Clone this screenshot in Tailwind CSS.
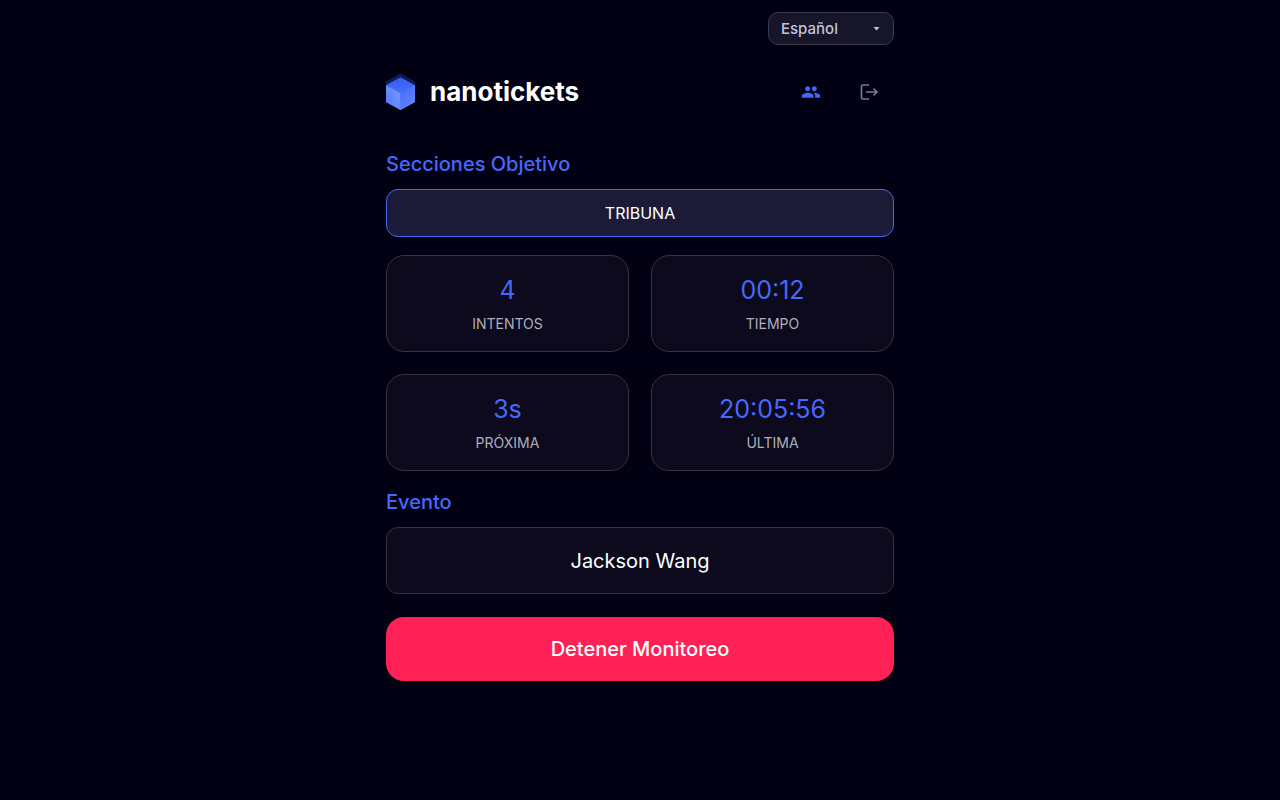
<!DOCTYPE html>
<html lang="es">
<head>
<meta charset="utf-8">
<meta name="viewport" content="width=device-width, initial-scale=1">
<title>nanotickets</title>
<script src="https://cdn.jsdelivr.net/npm/@tailwindcss/browser@4"></script>
</head>
<body class="min-h-screen bg-[#020013] font-['Inter','Liberation_Sans',sans-serif] text-white">
<div class="mx-auto flex w-full max-w-[508px] flex-col pt-3 pb-8">
  <div class="grid w-[126px] self-end">
    <select id="lang" aria-label="Idioma" class="col-start-1 row-start-1 h-[33px] appearance-none rounded-[10px] border border-[#3b394c] bg-[#161529] px-3 pt-px text-[15px] font-medium text-[#c5c3d9]">
      <option>Español</option>
      <option>English</option>
    </select>
    <svg class="pointer-events-none col-start-1 row-start-1 mr-[14px] h-1 w-[7px] self-center justify-self-end" viewBox="0 0 7 4" fill="#c5c3d9" aria-hidden="true"><path d="M0.500 0h6L3.500 3.400z"/></svg>
  </div>

  <header class="mt-[23px] flex h-12 items-center">
    <svg class="h-[38px] w-[30px]" viewBox="0 0 30 38" aria-hidden="true">
      <defs>
        <linearGradient id="top" x1="0" y1="0" x2="0" y2="1"><stop offset="0" stop-color="#315cf5"/><stop offset="1" stop-color="#4870ff"/></linearGradient>
        <linearGradient id="left" x1="1" y1="0" x2="0" y2="1"><stop offset="0" stop-color="#7d9bff"/><stop offset="1" stop-color="#4f78ff"/></linearGradient>
        <linearGradient id="right" x1="0" y1="0" x2="0.6" y2="1"><stop offset="0" stop-color="#4269f6"/><stop offset="1" stop-color="#6284ff"/></linearGradient>
      </defs>
      <path d="M14.500 0.500 29 8.500V13L14.500 6 0 13V8.500z" fill="#141a55"/>
      <path d="M14.500 4.500 29 12.500V29L14.500 37 0 29V12.500z" fill="#4870ff"/>
      <path d="M14.500 4.500 29 12.500 14.500 20.500 0 12.500z" fill="url(#top)"/>
      <path d="M0 12.500 14.500 20.500V37L0 29z" fill="url(#left)"/>
      <path d="M29 12.500 14.500 20.500V37L29 29z" fill="url(#right)"/>
    </svg>
    <span class="ml-[14px] text-[26px] leading-8 font-bold">nanotickets</span>
    <div class="ml-auto flex gap-[10px] pr-px">
      <button type="button" aria-label="Usuarios" class="flex size-12 items-center justify-center text-[#4566f5]">
        <svg class="size-5" viewBox="0 0 24 24" fill="currentColor" aria-hidden="true"><path d="M16 11c1.660 0 2.990-1.340 2.990-3S17.660 5 16 5s-3 1.340-3 3 1.340 3 3 3zm-8 0c1.660 0 2.990-1.340 2.990-3S9.660 5 8 5 5 6.340 5 8s1.340 3 3 3zm0 2c-2.330 0-7 1.170-7 3.500V19h14v-2.500c0-2.330-4.670-3.500-7-3.500zm8 0c-.290 0-.620.020-.970.050 1.160.840 1.970 1.970 1.970 3.450V19h6v-2.500c0-2.330-4.670-3.500-7-3.500z"/></svg>
      </button>
      <button type="button" aria-label="Salir" class="flex size-12 items-center justify-center text-[#7b798c]">
        <svg class="size-[22px]" viewBox="0 0 22 22" fill="none" stroke="currentColor" stroke-width="1.700" aria-hidden="true"><path d="M11 4H5Q3.500 4 3.500 5.500V16.500Q3.500 18 5 18H11M8 11H19M15.500 7.500 19 11 15.500 14.500"/></svg>
      </button>
    </div>
  </header>

  <main class="flex flex-col">
    <h2 class="mt-[34px] text-xl leading-7 font-medium text-[#4569fc]">Secciones Objetivo</h2>
    <button type="button" class="mt-[11px] h-12 rounded-xl border border-[#4566f5] bg-[#1b1a37] text-base">TRIBUNA</button>

    <dl class="mt-[18px] grid grid-cols-2 gap-[22px] text-center">
      <div class="flex h-[97px] flex-col-reverse justify-center gap-2 rounded-[18px] border border-[#363443] bg-[#0c0a1c]">
        <dt class="text-sm leading-5 text-[#b0aebf]">INTENTOS</dt><dd class="text-[25px] leading-8 text-[#4569fc]">4</dd>
      </div>
      <div class="flex h-[97px] flex-col-reverse justify-center gap-2 rounded-[18px] border border-[#363443] bg-[#0c0a1c]">
        <dt class="text-sm leading-5 text-[#b0aebf]">TIEMPO</dt><dd class="text-[25px] leading-8 text-[#4569fc]">00:12</dd>
      </div>
      <div class="flex h-[97px] flex-col-reverse justify-center gap-2 rounded-[18px] border border-[#363443] bg-[#0c0a1c]">
        <dt class="text-sm leading-5 text-[#b0aebf]">PRÓXIMA</dt><dd class="text-[25px] leading-8 text-[#4569fc]">3s</dd>
      </div>
      <div class="flex h-[97px] flex-col-reverse justify-center gap-2 rounded-[18px] border border-[#363443] bg-[#0c0a1c]">
        <dt class="text-sm leading-5 text-[#b0aebf]">ÚLTIMA</dt><dd class="text-[25px] leading-8 text-[#4569fc]">20:05:56</dd>
      </div>
    </dl>

    <h2 class="mt-[17px] text-xl leading-7 font-medium text-[#4569fc]">Evento</h2>
    <p class="mt-[11px] flex h-[67px] items-center justify-center rounded-xl border border-[#363443] bg-[#0c0a1c] text-xl">Jackson Wang</p>
    <button type="button" class="mt-[23px] h-16 rounded-[18px] bg-[#ff2056] text-xl font-medium">Detener Monitoreo</button>
  </main>
</div>
</body>
</html>
